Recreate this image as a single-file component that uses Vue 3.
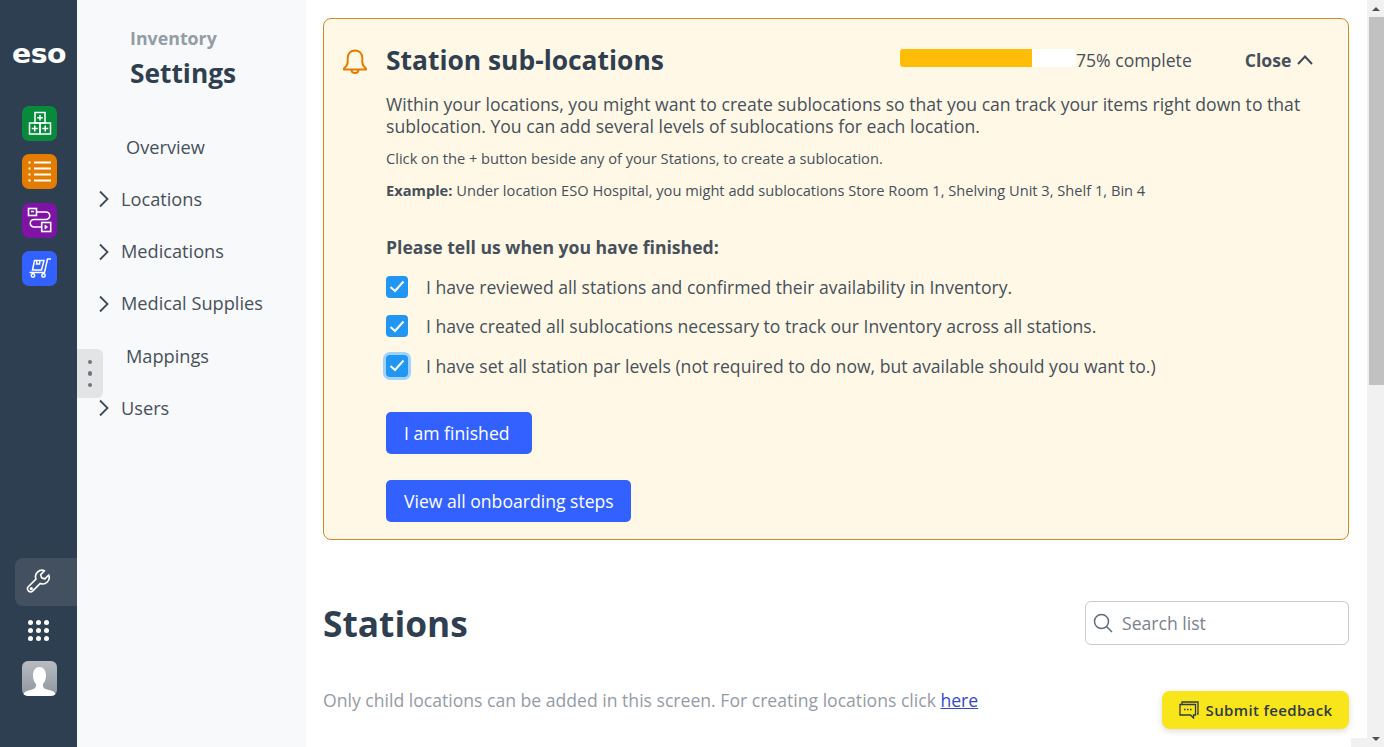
<script setup>
import { ref } from "vue";

const apps = [
  { name: "boxes", color: "#078a3c" },
  { name: "list", color: "#e47c00" },
  { name: "flow", color: "#7e13a6" },
  { name: "cart", color: "#3361ff" },
];

const menu = [
  { label: "Overview", arrow: false, cls: "plain" },
  { label: "Locations", arrow: true },
  { label: "Medications", arrow: true },
  { label: "Medical Supplies", arrow: true },
  { label: "Mappings", arrow: false, cls: "plain" },
  { label: "Users", arrow: true },
];

const checks = ref([
  { text: "I have reviewed all stations and confirmed their availability in Inventory.", focus: false },
  { text: "I have created all sublocations necessary to track our Inventory across all stations.", focus: false },
  { text: "I have set all station par levels (not required to do now, but available should you want to.)", focus: true },
]);

const dots = [1, 2, 3, 4, 5, 6, 7, 8, 9];
</script>

<template>
  <div class="page">
    <nav class="rail">
      <div class="logo">eso</div>
      <div class="apps">
        <div v-for="app in apps" :key="app.name" class="app" :style="{ background: app.color }">
          <svg v-if="app.name === 'boxes'" width="28" height="28" viewBox="0 0 28 28" fill="none" stroke="#fff" stroke-width="1.5">
            <rect x="9" y="2.500" width="10" height="10.500" />
            <rect x="3.500" y="13" width="10.500" height="11" />
            <rect x="14" y="13" width="10.500" height="11" />
            <path d="M14 5v5.500M11.200 7.750h5.600M8.750 15.500v6M5.750 18.500h6M19.250 15.500v6M16.250 18.500h6" />
          </svg>
          <svg v-else-if="app.name === 'list'" width="28" height="28" viewBox="0 0 28 28" fill="none" stroke="#fff" stroke-width="2">
            <path d="M8 4.500h17M8 10.500h17M8 16.500h17M8 22.500h17" />
            <path d="M2.500 4.500h2M2.500 10.500h2M2.500 16.500h2M2.500 22.500h2" />
          </svg>
          <svg v-else-if="app.name === 'flow'" width="28" height="28" viewBox="0 0 28 28" fill="none" stroke="#fff" stroke-width="1.600">
            <rect x="2.500" y="2.500" width="8" height="7" />
            <path d="M5 5.500h3" />
            <path d="M10.500 6H20a3.750 3.750 0 0 1 0 7.500H8a3.750 3.750 0 0 0 0 7.500h7.500" />
            <rect x="15.700" y="16.500" width="9" height="9" />
            <path d="M19 19v4l2.500-2z" fill="#fff" stroke-width="0.800" />
          </svg>
          <svg v-else width="28" height="28" viewBox="0 0 28 28" fill="none" stroke="#fff" stroke-width="1.500">
            <path d="M25 5h-3.500l-3 13.500H3.500" />
            <path d="M8.500 6.500h9.500L15.500 16H6.500z" />
            <path d="M11 6.500l-.5 3.500h3l.5-3.500" />
            <circle cx="7" cy="21.500" r="1.700" />
            <circle cx="17.500" cy="21.500" r="1.700" />
          </svg>
        </div>
      </div>
      <div class="rail-bottom">
        <div class="tool">
          <svg width="26" height="26" viewBox="0 0 24 24" fill="none" stroke="#fff" stroke-width="1.500" stroke-linejoin="round">
            <path d="M21 5.500l-3.600 3.600-3-.9-.9-3L17.100 1.600a6 6 0 0 0-7.900 7.700L2.300 16.200a2.800 2.800 0 0 0 4 4l6.900-6.900A6 6 0 0 0 21 5.500z" />
            <circle cx="4.900" cy="18.100" r="0.800" />
          </svg>
        </div>
        <div class="grid-dots">
          <span v-for="d in dots" :key="d"></span>
        </div>
        <div class="avatar">
          <svg width="35" height="35" viewBox="0 0 35 35">
            <path d="M1 35v-1c1-3 3-4 7-5 4-1 6-2 6-4v-2c-2-2-3-5-3-9 0-5 3-8 6.500-8S24 9 24 14c0 4-1 7-3 9v2c0 2 2 3 6 4 4 1 6 2 7 5v1z" fill="#fff" />
          </svg>
        </div>
      </div>
    </nav>

    <aside class="settings">
      <div class="settings-head">
        <div class="crumb">Inventory</div>
        <h2>Settings</h2>
      </div>
      <ul class="menu">
        <li v-for="item in menu" :key="item.label" :class="item.cls">
          <svg v-if="item.arrow" class="arrow" width="12" height="18" viewBox="0 0 12 18" fill="none" stroke="#3f4a56" stroke-width="1.800">
            <path d="M2 1.500l7.500 7.500L2 16.500" />
          </svg>
          {{ item.label }}
        </li>
      </ul>
      <div class="handle"><i></i><i></i><i></i></div>
    </aside>

    <main class="main">
      <section class="card">
        <header class="card-head">
          <svg class="bell" width="26" height="28" viewBox="0 0 26 28" fill="none" stroke="#e47c00" stroke-width="2" stroke-linejoin="round">
            <path d="M13 2.500c-4.500 0-7.300 3.300-7.300 7.500v4c0 3-1.200 4.500-3.700 6.500v1h22v-1c-2.500-2-3.700-3.500-3.700-6.500v-4c0-4.200-2.800-7.500-7.300-7.500z" />
            <path d="M9.500 21.500c0 2.200 1.500 3.500 3.500 3.500s3.500-1.300 3.500-3.500" />
          </svg>
          <h1>Station sub-locations</h1>
          <div class="progress"><div class="progress-fill"></div></div>
          <span class="percent">75% complete</span>
          <span class="close">Close
            <svg width="18" height="12" viewBox="0 0 18 12" fill="none" stroke="#3f4a56" stroke-width="2">
              <path d="M2 10l7-7.500 7 7.500" />
            </svg>
          </span>
        </header>
        <div class="card-body">
          <p class="lead">Within your locations, you might want to create sublocations so that you can track your items right down to that sublocation. You can add several levels of sublocations for each location.</p>
          <p class="small first">Click on the + button beside any of your Stations, to create a sublocation.</p>
          <p class="small"><b>Example:</b> Under location ESO Hospital, you might add sublocations Store Room 1, Shelving Unit 3, Shelf 1, Bin 4</p>
          <p class="ask">Please tell us when you have finished:</p>
          <div class="checks">
            <label v-for="c in checks" :key="c.text" class="check">
              <span class="box" :class="{ focus: c.focus }">
                <svg width="16" height="13" viewBox="0 0 16 13" fill="none" stroke="#fff" stroke-width="2">
                  <path d="M1.500 7l4.500 4 8.500-9.500" />
                </svg>
              </span>
              {{ c.text }}
            </label>
          </div>
          <div class="buttons">
            <button class="btn finish">I am finished</button>
            <button class="btn">View all onboarding steps</button>
          </div>
        </div>
      </section>

      <div class="stations-head">
        <h2>Stations</h2>
        <div class="search">
          <svg width="20" height="20" viewBox="0 0 20 20" fill="none" stroke="#5f6b78" stroke-width="1.500">
            <circle cx="8.500" cy="8.500" r="7" />
            <path d="M13.500 13.500l5.500 5.500" />
          </svg>
          <span>Search list</span>
        </div>
      </div>
      <p class="hint">Only child locations can be added in this screen. For creating locations click <a href="#">here</a></p>

      <button class="feedback">
        <svg width="20" height="18" viewBox="0 0 20 18" fill="none" stroke="#2f3b46" stroke-width="1.300">
          <path d="M3 3V1h16v12h-1" />
          <path d="M1 3.500h15.500v10.500h-2v3l-3-3H1z" />
          <path d="M5 8.500h1.500M8 8.500h1.500M11 8.500h1.500" stroke-width="1.500" />
        </svg>
        Submit feedback
      </button>
      <div class="h-scroll-end"></div>
    </main>

    <div class="scrollbar">
      <div class="sb-btn"><i class="up"></i></div>
      <div class="sb-track"><div class="sb-thumb"></div></div>
      <div class="sb-btn"><i class="down"></i></div>
    </div>
  </div>
</template>

<style scoped>
.page {
  display: flex;
  height: 747px;
  overflow: hidden;
  font-family: "Open Sans", "Noto Sans", sans-serif;
  color: #47505a;
  background: #fff;
}

/* left rail */
.rail {
  width: 77px;
  flex: none;
  background: #2e3f51;
  display: flex;
  flex-direction: column;
  align-items: center;
}
.logo {
  margin-top: 34px;
  height: 40px;
  width: 100%;
  text-align: center;
  font-family: "DejaVu Sans", sans-serif;
  font-weight: 700;
  font-size: 27px;
  line-height: 40px;
  letter-spacing: -0.500px;
  color: #fff;
  transform: scaleX(1.05);
  padding-left: 1px;
  box-sizing: border-box;
}
.apps {
  margin-top: 32px;
  display: flex;
  flex-direction: column;
  gap: 13.300px;
  padding-left: 2px;
}
.app {
  width: 35px;
  height: 35px;
  border-radius: 7px;
  display: flex;
  align-items: center;
  justify-content: center;
}
.rail-bottom {
  margin-top: auto;
  width: 100%;
  padding-bottom: 51px;
  display: flex;
  flex-direction: column;
  align-items: center;
}
.tool {
  align-self: flex-end;
  width: 62px;
  height: 48px;
  background: #43505f;
  border-radius: 8px 0 0 8px;
  display: flex;
  align-items: center;
  justify-content: center;
  padding-right: 14px;
  box-sizing: border-box;
}
.grid-dots {
  margin-top: 14px;
  display: grid;
  grid-template-columns: repeat(3, 5.500px);
  gap: 2.500px;
}
.grid-dots span {
  width: 5.500px;
  height: 5.500px;
  border-radius: 50%;
  background: #fff;
}
.avatar {
  margin-top: 20px;
  margin-left: 2px;
  width: 35px;
  height: 35px;
  border-radius: 6px;
  overflow: hidden;
  background: linear-gradient(#b6bcc1, #8f979e);
}
.avatar svg {
  display: block;
}

/* settings column */
.settings {
  width: 229px;
  flex: none;
  background: #f8f9fb;
  position: relative;
}
.settings-head {
  padding: 27px 0 0 53px;
}
.crumb {
  font-size: 17.800px;
  font-weight: 700;
  line-height: 22px;
  color: #949ca4;
}
.settings h2 {
  margin: 7px 0 0;
  font-size: 26.300px;
  font-weight: 700;
  line-height: 34px;
  color: #2f3f50;
}
.menu {
  list-style: none;
  margin: 0;
  padding: 0;
  position: absolute;
  top: 120.800px;
  left: 0;
  right: 0;
}
.menu li {
  height: 52.200px;
  display: flex;
  align-items: center;
  padding-left: 44px;
  position: relative;
  font-size: 18.200px;
  font-weight: 500;
  color: #47505a;
}
.menu li.plain {
  padding-left: 49px;
}
.arrow {
  position: absolute;
  left: 21px;
  top: 17.500px;
}
.handle {
  position: absolute;
  left: 0;
  top: 349px;
  width: 26px;
  height: 49px;
  background: #e3e4e6;
  border-radius: 0 6px 6px 0;
  display: flex;
  flex-direction: column;
  align-items: center;
  justify-content: center;
  gap: 7px;
}
.handle i {
  width: 4.500px;
  height: 4.500px;
  border-radius: 50%;
  background: #6d7680;
}

/* main content */
.main {
  flex: 1;
  min-width: 0;
  padding: 18px 18px 0 17px;
  position: relative;
}
.card {
  height: 522px;
  box-sizing: border-box;
  border: 1px solid #d08a2c;
  border-radius: 8px;
  background: #fff8e6;
  padding: 0 0 0 62px;
}
.card-head {
  display: flex;
  align-items: center;
  height: 82px;
  position: relative;
}
.bell {
  position: absolute;
  left: -44px;
  top: 29px;
}
.card-head h1 {
  margin: 0;
  width: 514px;
  font-size: 26.400px;
  font-weight: 700;
  color: #2f3f50;
}
.progress {
  width: 176px;
  height: 18px;
  margin-bottom: 4px;
  background: #fff;
  border-radius: 3px;
  overflow: hidden;
}
.progress-fill {
  width: 75%;
  height: 100%;
  background: #ffbd07;
}
.percent {
  font-size: 17.600px;
}
.close {
  margin-left: 53px;
  font-size: 17.600px;
  font-weight: 700;
  display: flex;
  align-items: center;
  gap: 5px;
}
.card-body {
  padding-right: 40px;
}
.lead {
  margin: -8px 0 0;
  font-size: 17.600px;
  line-height: 22px;
}
.small {
  margin: 12px 0 0;
  font-size: 14.650px;
  line-height: 20px;
}
.small.first {
  margin-top: 11px;
}
.ask {
  margin: 35px 0 0;
  font-size: 17.600px;
  line-height: 24px;
  font-weight: 700;
}
.checks {
  margin-top: 15.500px;
  display: flex;
  flex-direction: column;
  gap: 15.500px;
}
.check {
  display: flex;
  align-items: center;
  gap: 18px;
  font-size: 17.600px;
  line-height: 24px;
}
.box {
  width: 22px;
  height: 22px;
  flex: none;
  border-radius: 4px;
  background: #2196f3;
  display: flex;
  align-items: center;
  justify-content: center;
}
.box.focus {
  box-shadow: 0 0 0 3px #9fd3fb;
}
.buttons {
  margin-top: 34.500px;
  display: flex;
  flex-direction: column;
  align-items: flex-start;
  gap: 26px;
}
.btn {
  height: 42px;
  padding: 0 17px 0 18px;
  border: none;
  border-radius: 5px;
  background: #3361ff;
  color: #fff;
  font-family: inherit;
  font-size: 17.600px;
  text-align: left;
}
.btn.finish {
  width: 146px;
}
.stations-head {
  margin-top: 59px;
  display: flex;
  justify-content: space-between;
  align-items: center;
}
.stations-head h2 {
  margin: 0;
  font-size: 35.300px;
  font-weight: 700;
  color: #2f3f50;
}
.search {
  width: 264px;
  height: 44px;
  box-sizing: border-box;
  border: 1px solid #c9cbce;
  border-radius: 6px;
  display: flex;
  align-items: center;
  gap: 9px;
  padding-left: 7px;
  font-size: 17.600px;
  color: #7a838c;
}
.hint {
  margin: 41px 0 0;
  font-size: 17.600px;
  line-height: 24px;
  color: #949ca4;
}
.hint a {
  color: #3349c9;
}
.feedback {
  position: absolute;
  right: 18px;
  top: 691px;
  width: 187px;
  height: 38px;
  border: none;
  border-radius: 8px;
  background: #f9e61a;
  box-shadow: 0 2px 6px rgba(0, 0, 0, 0.15);
  display: flex;
  align-items: center;
  justify-content: center;
  gap: 7px;
  font-family: inherit;
  font-size: 15px;
  font-weight: 600;
  letter-spacing: 0.350px;
  color: #2f3b46;
}
.h-scroll-end {
  position: absolute;
  right: 0;
  bottom: 0;
  width: 16px;
  height: 9px;
  background: #f1f1f1;
}

/* fake scrollbar */
.scrollbar {
  width: 17px;
  flex: none;
  background: #f1f1f1;
  display: flex;
  flex-direction: column;
}
.sb-btn {
  height: 17px;
  display: flex;
  align-items: center;
  justify-content: center;
}
.sb-btn i {
  width: 0;
  height: 0;
  border-left: 4px solid transparent;
  border-right: 4px solid transparent;
}
.sb-btn .up {
  border-bottom: 4px solid #505050;
}
.sb-btn .down {
  border-top: 4px solid #505050;
}
.sb-track {
  flex: 1;
}
.sb-thumb {
  height: 368px;
  margin-left: 2px;
  background: #c1c1c1;
}
</style>
